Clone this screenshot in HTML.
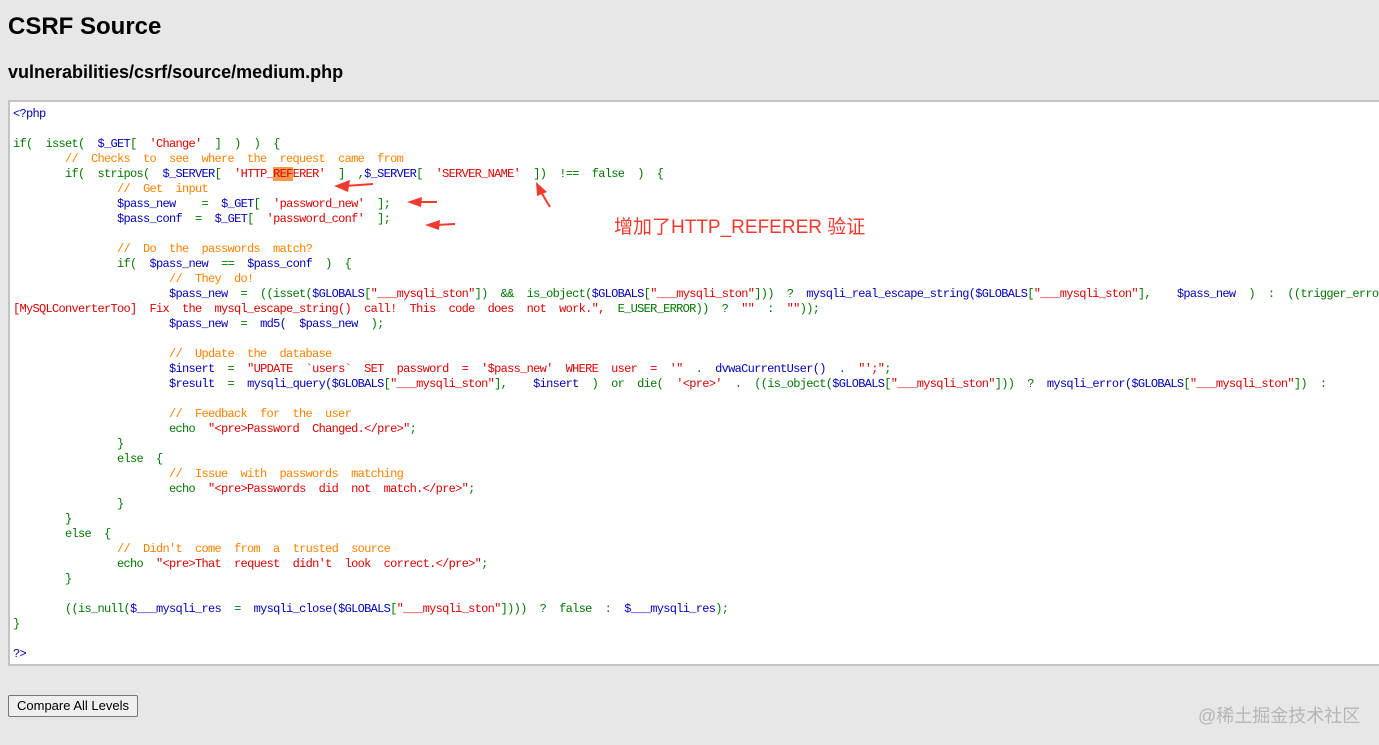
<!DOCTYPE html>
<html><head><meta charset="utf-8"><style>
body{margin:0;background:#e7e7e7;width:1379px;height:745px;overflow:hidden;position:relative;font-family:"Liberation Sans",Arial,sans-serif}
h1{position:absolute;left:8px;top:13px;margin:0;font-size:24px;font-weight:bold;color:#000}
h2{position:absolute;left:8px;top:62px;margin:0;font-size:18px;font-weight:bold;color:#000}
.box{position:absolute;left:8px;top:100px;width:1390px;height:562px;background:#fff;border:2px solid #c4c4c4}
pre,pre span{font-family:"Liberation Mono","DejaVu Sans Mono","Courier New",monospace}
pre{position:absolute;left:13px;top:107px;margin:0;font-size:12px;letter-spacing:-0.7px;line-height:15px;tab-size:8;-moz-tab-size:8;color:#0000bb;white-space:pre}
.k{color:#007700}.s{color:#dd0000}.c{color:#ff8000}.v{color:#0000bb}
.hl{background:#f39b4b}
.btn{position:absolute;left:8px;top:695px;width:128px;height:20px;border:1px solid #767676;border-radius:2px;background:#efefef;font-size:13px;line-height:20px;text-align:center;color:#000}
.wm{position:absolute;left:1198px;top:702px;font-family:"Liberation Sans","Noto Sans CJK SC",sans-serif;font-size:18px;color:#b5b5b5}
.note{position:absolute;left:614px;top:212px;font-family:"Liberation Sans","Noto Sans CJK SC",sans-serif;font-size:19px;color:#f03a2e}
svg{position:absolute;left:0;top:0}
</style></head><body>
<h1>CSRF Source</h1>
<h2>vulnerabilities/csrf/source/medium.php</h2>
<div class="box"></div>
<pre><span class="v">&lt;?php</span>

<span class="k">if(  isset(  </span><span class="v">$_GET</span><span class="k">[  </span><span class="s">'Change'</span><span class="k">  ]  )  )  {</span>
	<span class="c">//  Checks  to  see  where  the  request  came  from</span>
	<span class="k">if(  stripos(  </span><span class="v">$_SERVER</span><span class="k">[  </span><span class="s">'HTTP_<span class="hl">REF</span>ERER'</span><span class="k">  ]  ,</span><span class="v">$_SERVER</span><span class="k">[  </span><span class="s">'SERVER_NAME'</span><span class="k">  ])  !==  false  )  {</span>
		<span class="c">//  Get  input</span>
		<span class="v">$pass_new  </span><span class="k">  =  </span><span class="v">$_GET</span><span class="k">[  </span><span class="s">'password_new'</span><span class="k">  ];</span>
		<span class="v">$pass_conf</span><span class="k">  =  </span><span class="v">$_GET</span><span class="k">[  </span><span class="s">'password_conf'</span><span class="k">  ];</span>

		<span class="c">//  Do  the  passwords  match?</span>
		<span class="k">if(  </span><span class="v">$pass_new  </span><span class="k">==  </span><span class="v">$pass_conf  </span><span class="k">)  {</span>
			<span class="c">//  They  do!</span>
			<span class="v">$pass_new  </span><span class="k">=  ((isset(</span><span class="v">$GLOBALS</span><span class="k">[</span><span class="s">"___mysqli_ston"</span><span class="k">])  &amp;&amp;  is_object(</span><span class="v">$GLOBALS</span><span class="k">[</span><span class="s">"___mysqli_ston"</span><span class="k">]))  ?  </span><span class="v">mysqli_real_escape_string(</span><span class="v">$GLOBALS</span><span class="k">[</span><span class="s">"___mysqli_ston"</span><span class="k">],    </span><span class="v">$pass_new  </span><span class="k">)  :  ((trigger_error(</span>
<span class="s">[MySQLConverterToo]  Fix  the  mysql_escape_string()  call!  This  code  does  not  work.",</span><span class="k">  E_USER_ERROR))  ?  </span><span class="s">""</span><span class="k">  :  </span><span class="s">""</span><span class="k">));</span>
			<span class="v">$pass_new  </span><span class="k">=  </span><span class="v">md5(  $pass_new  </span><span class="k">);</span>

			<span class="c">//  Update  the  database</span>
			<span class="v">$insert  </span><span class="k">=  </span><span class="s">"UPDATE  `users`  SET  password  =  '$pass_new'  WHERE  user  =  '"</span><span class="k">  .  </span><span class="v">dvwaCurrentUser()  </span><span class="k">.  </span><span class="s">"';"</span><span class="k">;</span>
			<span class="v">$result  </span><span class="k">=  </span><span class="v">mysqli_query(</span><span class="v">$GLOBALS</span><span class="k">[</span><span class="s">"___mysqli_ston"</span><span class="k">],    </span><span class="v">$insert  </span><span class="k">)  or  die(  </span><span class="s">'&lt;pre&gt;'</span><span class="k">  .  ((is_object(</span><span class="v">$GLOBALS</span><span class="k">[</span><span class="s">"___mysqli_ston"</span><span class="k">]))  ?  </span><span class="v">mysqli_error(</span><span class="v">$GLOBALS</span><span class="k">[</span><span class="s">"___mysqli_ston"</span><span class="k">])  :</span>

			<span class="c">//  Feedback  for  the  user</span>
			<span class="k">echo  </span><span class="s">"&lt;pre&gt;Password  Changed.&lt;/pre&gt;"</span><span class="k">;</span>
		<span class="k">}</span>
		<span class="k">else  {</span>
			<span class="c">//  Issue  with  passwords  matching</span>
			<span class="k">echo  </span><span class="s">"&lt;pre&gt;Passwords  did  not  match.&lt;/pre&gt;"</span><span class="k">;</span>
		<span class="k">}</span>
	<span class="k">}</span>
	<span class="k">else  {</span>
		<span class="c">//  Didn't  come  from  a  trusted  source</span>
		<span class="k">echo  </span><span class="s">"&lt;pre&gt;That  request  didn't  look  correct.&lt;/pre&gt;"</span><span class="k">;</span>
	<span class="k">}</span>

	<span class="k">((is_null(</span><span class="v">$___mysqli_res  </span><span class="k">=  </span><span class="v">mysqli_close(</span><span class="v">$GLOBALS</span><span class="k">[</span><span class="s">"___mysqli_ston"</span><span class="k">])))  ?  false  :  </span><span class="v">$___mysqli_res</span><span class="k">);</span>
<span class="k">}</span>

<span class="v">?&gt;</span></pre>
<svg width="1379" height="745">
<g fill="#f03a2e" stroke="#f03a2e" stroke-width="2">
<line x1="373" y1="184" x2="345" y2="186"/><polygon points="334,186 350,180 348,192" stroke="none"/>
<line x1="437" y1="202" x2="418" y2="202"/><polygon points="407,202 422,197 421,207" stroke="none"/>
<line x1="455" y1="224" x2="436" y2="225"/><polygon points="425,225 440,220 439,230" stroke="none"/>
<line x1="550" y1="207" x2="541" y2="192"/><polygon points="536,182 547,192 537,196" stroke="none"/>
</g>
</svg>
<div class="note">增加了HTTP_REFERER 验证</div>
<div class="btn">Compare All Levels</div>
<div class="wm">@稀土掘金技术社区</div>
</body></html>
